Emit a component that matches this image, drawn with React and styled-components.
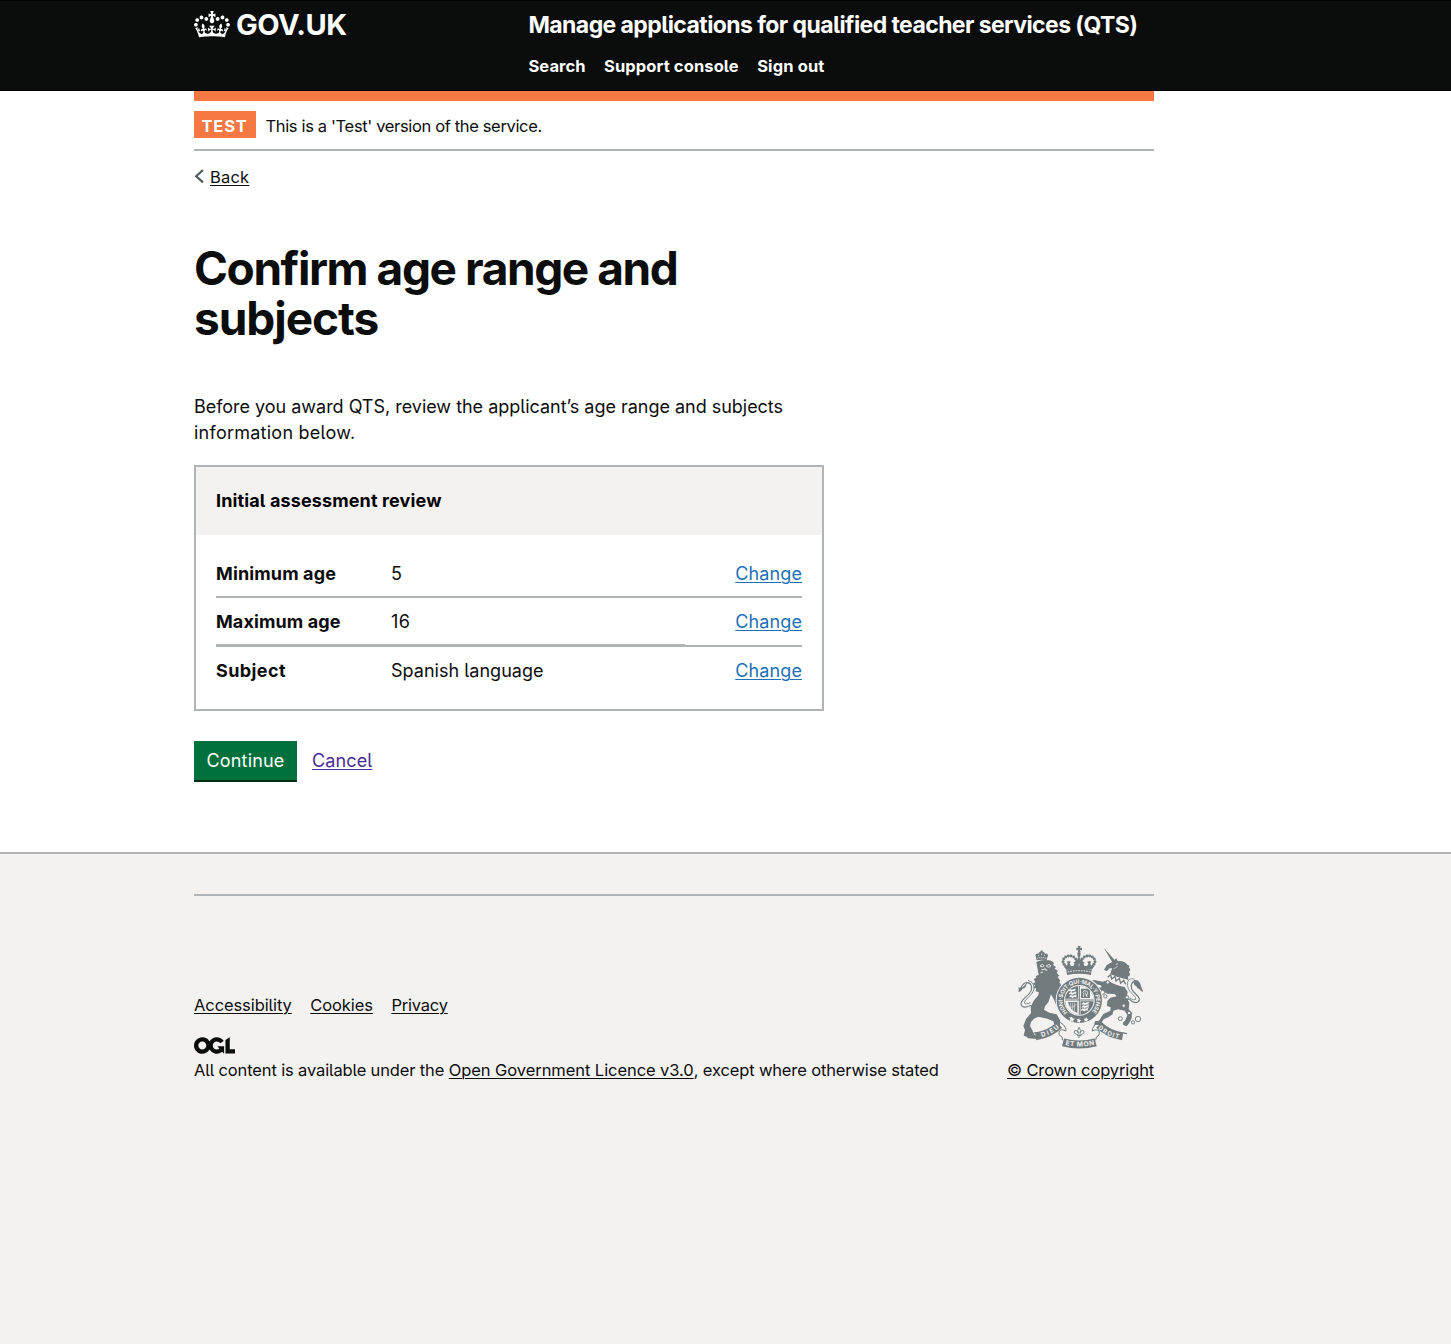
import React from "react";
import styled, { createGlobalStyle } from "styled-components";

const ink = "#0b0c0c";
const rule = "#b1b4b6";
const pale = "#f3f2f1";
const stone = "#717b7d";

const GlobalStyle = createGlobalStyle`
  *, *::before, *::after { box-sizing: border-box; }
  html { background: ${pale}; }
  body {
    margin: 0;
    background: #fff;
    color: ${ink};
    font-family: Inter, "Liberation Sans", sans-serif;
    font-feature-settings: "cv05";
  }
  h1, h2, p, dl, dt, dd, ul { margin: 0; padding: 0; }
`;

const Container = styled.div`
  width: 960px;
  margin-left: 194px;
`;

const Tracked = styled.span`
  letter-spacing: ${(p) => p.$track || 0}px;
`;

const Link = styled.a`
  color: ${(p) => p.$color || ink};
  letter-spacing: ${(p) => p.$track || 0}px;
  text-decoration: underline;
  text-decoration-thickness: 1px;
  text-underline-offset: 2px;
`;

const Header = styled.header`
  height: 91px;
  background: ${ink};
  border-top: 1px solid #000;
  border-bottom: 1px solid #000;
  color: #fff;
`;

const HeaderInner = styled(Container)`
  display: flex;
`;

const LogoLink = styled.a`
  display: flex;
  width: 334.5px;
  padding-top: 10px;
  color: #fff;
`;

const Crown = styled.svg`
  display: block;
  width: 36px;
  height: 26.5px;
  margin-right: 6px;
`;

const LogoText = styled.span`
  font-size: 29px;
  line-height: 28px;
  font-weight: 700;
  letter-spacing: -0.5px;
`;

const ServiceName = styled.div`
  padding-top: 12px;
  font-size: 23px;
  line-height: 24px;
  font-weight: 700;
  letter-spacing: -0.58px;
  white-space: nowrap;
`;

const Nav = styled.nav`
  display: flex;
  gap: 18.5px;
  padding-top: 19px;
  font-size: 16.5px;
  line-height: 20px;
  font-weight: 700;
`;

const Strip = styled.div`
  height: 10px;
  background: #f77842;
`;

const PhaseBanner = styled.div`
  display: flex;
  gap: 9.5px;
  height: 50px;
  padding-top: 10px;
  border-bottom: 2px solid ${rule};
  font-size: 16.5px;
`;

const Tag = styled.strong`
  width: 62px;
  height: 27px;
  padding: 3px 0 0 7.5px;
  background: #f77842;
  color: #fff;
  line-height: 24px;
  letter-spacing: 0.8px;
`;

const PhaseText = styled.span`
  padding-top: 3px;
  line-height: 24px;
  letter-spacing: -0.35px;
`;

const BackRow = styled.div`
  display: flex;
  align-items: center;
  height: 20px;
  margin-top: 16px;
  font-size: 16.5px;
  line-height: 20px;
`;

const Chevron = styled.svg`
  width: 16px;
  height: 16px;
`;

const Main = styled.main`
  width: 630px;
  height: 665px;
  padding-top: 56px;
`;

const Title = styled.h1`
  font-size: 46px;
  line-height: 50px;
  font-weight: 700;
  letter-spacing: -1.42px;
`;

const Lead = styled.p`
  margin-top: 51px;
  font-size: 18px;
  line-height: 26px;
  letter-spacing: -0.02px;
`;

const Card = styled.section`
  height: 246px;
  margin-top: 19px;
  border: 2px solid ${rule};
  font-size: 18px;
  line-height: 26px;
`;

const CardTitle = styled.h2`
  height: 68px;
  padding: 21px 20px 0;
  background: ${pale};
  color: #000;
  font-size: 18px;
  line-height: 26px;
  letter-spacing: 0.13px;
`;

const Summary = styled.dl`
  padding: 15px 20px 0;
`;

const SummaryRow = styled.div`
  display: grid;
  grid-template-columns: 175px 294px 117px;
  height: ${(p) => p.$height}px;
`;

const Cell = styled.dd`
  padding-top: 11px;
  border-bottom: ${(p) => p.$line}px solid ${rule};
  letter-spacing: ${(p) => p.$track || 0}px;
`;

const Key = styled(Cell)`
  font-weight: 700;
`;

const Action = styled(Cell)`
  text-align: right;
`;

const Actions = styled.div`
  display: flex;
  gap: 15px;
  margin-top: 30px;
  font-size: 18px;
  line-height: 39px;
`;

const Button = styled.button`
  width: 103px;
  height: 39px;
  padding: 0;
  border: 0;
  background: #00703c;
  box-shadow: 0 2px 0 #002d18;
  color: #fff;
  font: inherit;
  font-feature-settings: inherit;
  letter-spacing: 0.17px;
`;

const Footer = styled.footer`
  height: 492px;
  padding-top: 40px;
  border-top: 2px solid ${rule};
  background: ${pale};
  font-size: 16.5px;
  line-height: 20px;
`;

const FooterInner = styled(Container)`
  display: flex;
  justify-content: space-between;
  padding-top: 50px;
  border-top: 2px solid ${rule};
`;

const FooterMeta = styled.div`
  padding-top: 49px;
`;

const FooterLinks = styled.div`
  display: flex;
  gap: 18.5px;
`;

const OglLogo = styled.svg`
  display: block;
  width: 41px;
  height: 17px;
  margin: 22px 0 6px;
`;

const Copyright = styled.div`
  display: flex;
  flex-direction: column;
  align-items: center;
  width: 147px;
  white-space: nowrap;
`;

const CrestSvg = styled.svg`
  display: block;
  width: 125px;
  height: 103px;
  margin-bottom: 11px;
`;

const rows = [
  { key: "Minimum age", value: "5", height: 48, line: 2, kt: 0.13, vt: 0 },
  { key: "Maximum age", value: "16", height: 49, line: 3, kt: 0.1, vt: 0.5 },
  { key: "Subject", value: "Spanish language", height: 50, line: 0, kt: 0.4, vt: 0.03 },
];

const pearls = [
  [177, 88], [174, 80], [176, 72], [182, 66], [190, 63], [198, 63], [206, 66], [212, 72],
  [267, 88], [270, 80], [268, 72], [262, 66], [254, 63], [246, 63], [238, 66], [232, 72],
  [222, 62], [222, 71], [222, 80],
];

const shieldLions = [[199, 166], [201, 175], [202, 184], [239, 206], [239, 215], [237, 224]];

function Crest() {
  return (
    <CrestSvg viewBox="39 33 375 309" fill={stone} aria-hidden="true">
      <defs>
        <clipPath id="shield"><circle cx="223" cy="196" r="43" /></clipPath>
        <path id="garter" d="M183 236 A56.5 56.5 0 1 1 265 234" />
        <path id="ribbonLeft" d="M92 304 Q136 297 163 270" />
        <path id="ribbonMid" d="M174 322 Q223 335 272 322" />
        <path id="ribbonRight" d="M282 270 Q309 297 353 304" />
      </defs>

      {/* crown */}
      <path d="M218 33h9l-2 6 6-1v8l-6-1 2 7h-9l2-7-6 1v-8l6 1z" />
      <circle cx="222" cy="56" r="5" />
      {pearls.map(([x, y]) => (
        <circle key={`${x}-${y}`} cx={x} cy={y} r="4.4" />
      ))}
      <path d="M184 104l-8-10 6-6 4 5 2-8-3-5 6-2 6 2-3 6 4 7 7 0 4-7-5-3 6-3 3-7h18l3 7 6 3-5 3 4 7 7 0 4-7-3-6 6-2 6 2-3 5 2 8 4-5 6 6-8 10z" />
      <path d="M184 105q38-9 76 0l-2 15q-36-8-72 0z" />
      <path d="M188 111q35-8 69 0" fill="none" stroke={pale} strokeWidth="3" strokeDasharray="5 3" />
      <path d="M206 80l-5 9M238 80l5 9M222 86v8" fill="none" stroke={pale} strokeWidth="2" />

      {/* lion */}
      <path d="M91 60q3-6 9-4 2-6 10-7 8 1 10 7 7-2 9 4l-4 16q-15-4-30 0z" />
      <circle cx="110" cy="50" r="3.6" />
      <path d="M96 70q14-4 28 0M99 63l4-3M117 60l4 3M110 56v5" fill="none" stroke={pale} strokeWidth="2.4" strokeDasharray="4 2" />
      <path d="M94 81q17-9 35-5 14 1 18 9l-3 5 9 6-4 5 10 7-4 5 8 9-5 4 8 11-3 4 6 10 3 10-8-2-3 13q-2 18 3 30l3 17-12-5-8-20-9-16-8 24-10 12-3 10 16 9 22 5 10 17 0 17-4 12-20 1-1-9 9-3-4-14-18-8-27-6-13 6-9 10-3 12 8 14 2 10 14 8-3 7-27-2-4-5-9-3 4-17-5-12 8-21 15-18-1-18 9-19 13-15 3-10-10-3 1-9-8-1 5-8-7-4 8-6-5-9 8-4-2-5 9-3z" />
      <path d="M105 93l7-5 5 4-4 4zM124 93l8-5 6 5-8 4zM118 98l5 6M109 104q10-3 18 3M106 113l8-2" fill="none" stroke={pale} strokeWidth="2.6" />
      <path d="M80 211q-28 12-32-3 0-10 15-23 22-18 16-33-4-11-17-9-12 4-16 22" fill="none" stroke={stone} strokeWidth="3.4" />
      <path d="M76 203q-15 7-18 1 0-7 12-17 19-17 17-32-3-16-18-18" fill="none" stroke={stone} strokeWidth="2.8" />
      <path d="M66 140q-7 14-16 17-7 4-10-2 3 12 0 17 9-2 13-11 12-3 13-21z" />

      {/* unicorn */}
      <path d="M296 38l35 39-8 6z" />
      <path d="M327 78l6-9 5 9q20-2 29 11 10 3 4 8 9 8 1 13 7 11-3 15l1 10-9-3q-25-5-45-15 3-13 6-17l-8 0-9 9-8-5 9-15z" />
      <path d="M339 86l-7 3M326 102l12-8" stroke={pale} strokeWidth="2" />
      <path d="M308 127l9-8 3 13 10-8 3 14 10-8 4 15 9-9 6 12" fill="none" stroke={stone} strokeWidth="4" />
      <path d="M308 136q22 16 51 20l9 15-3 17 8 16-2 19 10 10-1 17-6 12-9 12-11-6 6-10 7-18-8-13-20-4-14 4-2 11-12 8-15 7-11 17-18-1 3-10 12-2 13-20 21-10 1-10-11-4 1-15 9-10 19-4-6-7-22-1-18-10-15-1-7 8 8 9 11 2-1 11-15-3-12-17 10-17 23-1-5-7-18-2-12 2-6-9 17-6 26 5z" />
      <path d="M370 208q-10-18 4-15 12 14 24 8 13-8-6-24-18-16-12-31 5-9 20-7" fill="none" stroke={stone} strokeWidth="3.6" />
      <path d="M375 189q11 9 17 4 2-6-9-15-19-17-15-37 4-14 20-8" fill="none" stroke={stone} strokeWidth="2.4" />
      <path d="M386 135q12-2 19 9 3 10 10 27-9-3-12-9-6 0-8-7-8-2-9-11z" />
      <g fill="none" stroke={stone} strokeWidth="2.8">
        <circle cx="399" cy="252" r="8" />
        <circle cx="384" cy="262" r="5" />
        <circle cx="346" cy="251" r="6" />
        <circle cx="361" cy="265" r="6" />
        <circle cx="293" cy="172" r="6" fill={pale} />
        <circle cx="301" cy="184" r="5" fill={pale} />
        <circle cx="308" cy="142" r="5" fill={pale} />
        <circle cx="366" cy="187" r="5" fill={pale} />
        <circle cx="356" cy="212" r="5" fill={pale} />
        <circle cx="372" cy="234" r="5" fill={pale} />
      </g>

      {/* garter and shield */}
      <circle cx="223" cy="196" r="71" fill={pale} />
      <circle cx="223" cy="196" r="57" fill="none" stroke={stone} strokeWidth="22" />
      <g clipPath="url(#shield)">
        <path d="M180 152h86v88h-86z" />
        <path d="M181 195h42v45h-42zM223 152h43v43h-43z" fill={pale} />
        <path d="M228 161h27v28h-27z" />
        <path d="M235 186l2-9-4-4 4-6 8 1 4 6-4 6 1 6M241 172l4 12" fill="none" stroke={pale} strokeWidth="2.4" />
        <path d="M189 201h28v33q-22-8-28-33z" />
        <path d="M197 203v15M203 203v22M209 203v26M214 207q-6 11-17 10" fill="none" stroke={pale} strokeWidth="1.8" />
        {shieldLions.map(([x, y]) => (
          <path key={`${x}-${y}`} d={`M${x - 9} ${y}l5-4 6 2 8-3 4 2-3 2 2 5-4-2-6 1-3 3-3-4-6 1z`} fill={pale} />
        ))}
        <path d="M223 152v88M180 195h86" stroke={pale} strokeWidth="7" />
        <path d="M223 152v88M180 195h86" stroke={stone} strokeWidth="3" />
      </g>
      <text fontSize="17" fontWeight="700" fill={pale} dominantBaseline="central">
        <textPath href="#garter" textLength="262">HONI·SOIT·QUI·MAL·Y·PENSE</textPath>
      </text>
      <path d="M200 245l4 5 6 1-5 4 0 6-5-4-6 1 2-6-4-5 6 0zM222 249l2 5 5 2-4 3 0 5-4-3-5 1 2-5-3-4 5 0zM244 246l2 5 5 1-4 4 1 5-5-3-5 2 1-5-3-4 5 0z" fill={pale} />

      {/* motto ribbons */}
      <g fill="none">
        <path d="M92 304 Q136 297 163 270M282 270 Q309 297 353 304M174 322 Q223 335 272 322" stroke={stone} strokeWidth="24" />
        <path d="M80 296l14-3M366 296l-14-3" stroke={stone} strokeWidth="4" />
        <path d="M154 263q12-5 22 7 9 12 7 18-14-7-20 0-4 13 8 18l2 10M291 263q-12-5-22 7-9 12-7 18 14-7 20 0 4 13-8 18l-2 10" stroke={stone} strokeWidth="3" />
      </g>
      <g fill={pale} fontWeight="700" dominantBaseline="central">
        <text fontSize="19">
          <textPath href="#ribbonLeft" startOffset="17" textLength="58">DIEU</textPath>
        </text>
        <text fontSize="20">
          <textPath href="#ribbonMid" startOffset="8" textLength="86">ET MON</textPath>
        </text>
        <text fontSize="18">
          <textPath href="#ribbonRight" startOffset="4" textLength="66">DROIT</textPath>
        </text>
      </g>
      <path d="M222 277q8 9 3 18 2-10 11-8 5 8-4 10-4-1-3 3h-13q1-4-3-3-9-2-4-10 9-2 11 8-5-9 2-18zM216 302h13M222 302v7" fill="none" stroke={stone} strokeWidth="2.8" />
    </CrestSvg>
  );
}

export default function App() {
  return (
    <>
      <GlobalStyle />
      <Header>
        <HeaderInner>
          <LogoLink>
            <Crown viewBox="0 0 132 97" fill="currentColor" aria-hidden="true">
              <path d="M25 30.2c3.5 1.5 7.7-.2 9.1-3.7 1.5-3.6-.2-7.8-3.9-9.2-3.6-1.4-7.6.3-9.1 3.9-1.4 3.5.3 7.5 3.9 9zM9 39.5c3.6 1.5 7.8-.2 9.2-3.7 1.5-3.6-.2-7.8-3.9-9.1-3.6-1.5-7.6.2-9.1 3.8-1.4 3.5.3 7.5 3.8 9zM4.4 57.2c3.5 1.5 7.7-.2 9.1-3.8 1.5-3.6-.2-7.7-3.9-9.1-3.5-1.5-7.6.3-9.1 3.8-1.4 3.5.3 7.6 3.9 9.1zm38.3-21.4c3.5 1.5 7.7-.2 9.1-3.8 1.5-3.6-.2-7.7-3.9-9.1-3.6-1.5-7.6.3-9.1 3.8-1.3 3.6.4 7.7 3.9 9.1zm64.4-5.6c-3.6 1.5-7.8-.2-9.1-3.7-1.5-3.6.2-7.8 3.8-9.2 3.6-1.4 7.7.3 9.2 3.9 1.3 3.5-.4 7.5-3.9 9zm15.9 9.3c-3.6 1.5-7.7-.2-9.1-3.7-1.5-3.6.2-7.8 3.7-9.1 3.6-1.5 7.7.2 9.2 3.8 1.5 3.5-.3 7.5-3.8 9zm4.7 17.7c-3.6 1.5-7.8-.2-9.2-3.8-1.5-3.6.2-7.7 3.9-9.1 3.6-1.5 7.7.3 9.2 3.8 1.3 3.5-.4 7.6-3.9 9.1zM89.3 35.8c-3.6 1.5-7.8-.2-9.2-3.8-1.4-3.6.2-7.7 3.9-9.1 3.6-1.5 7.7.3 9.2 3.8 1.4 3.6-.3 7.7-3.9 9.1zM69.7 17.7l8.9 4.7V9.3l-8.9 2.8c-.2-.3-.5-.6-.9-.9L72.4 0H59.6l3.5 11.2c-.3.3-.6.5-.9.9l-8.8-2.8v13.1l8.8-4.7c.3.3.6.7.9.9l-5 15.4v.1c-.2.8-.4 1.6-.4 2.4 0 4.1 3.1 7.5 7 8.1h.2c.3 0 .7.1 1 .1.4 0 .7 0 1-.1h.2c4-.6 7.1-4.1 7.1-8.1 0-.8-.1-1.7-.4-2.4V34l-5.1-15.4c.4-.2.7-.6 1-.9zM66 92.8c16.9 0 32.8 1.1 47.1 3.2 4-16.9 8.9-26.7 14-33.5l-9.6-3.4c1 4.9 1.1 7.2 0 10.2-1.5-1.4-3-4.3-4.2-8.7L108.6 76c2.8-2 5-3.2 7.5-3.3-4.4 9.4-10 11.9-13.6 11.2-4.3-.8-6.3-4.6-5.6-7.9 1-4.7 5.7-5.9 8-.5 4.3-8.7-3-11.4-7.6-8.8 7.1-7.2 7.9-13.5 2.1-21.1-8 6.1-8.1 12.3-4.5 20.8-4.7-5.4-12.1-2.5-9.5 6.2 3.4-5.2 7.9-2 7.2 3.1-.6 4.3-6.4 7.8-13.5 7.2-10.3-.9-10.9-8-11.2-13.8 2.5-.5 7.1 1.8 11 7.3L80.2 60c-4.1 4.4-8 5.3-12.3 5.4 1.4-4.4 8-11.6 8-11.6H55.5s6.4 7.2 7.9 11.6c-4.2-.1-8-1-12.3-5.4l1.4 16.4c3.9-5.5 8.5-7.7 10.9-7.3-.3 5.8-.9 12.8-11.1 13.8-7.2.6-12.9-2.9-13.5-7.2-.7-5 3.8-8.3 7.1-3.1 2.7-8.7-4.6-11.6-9.4-6.2 3.7-8.5 3.6-14.7-4.6-20.8-5.8 7.6-5 13.9 2.2 21.1-4.7-2.6-11.9.1-7.7 8.8 2.3-5.5 7.1-4.2 8.1.5.7 3.3-1.3 7.1-5.7 7.9-3.5.7-9-1.8-13.5-11.2 2.5.1 4.7 1.3 7.5 3.3l-4.7-15.4c-1.2 4.4-2.7 7.2-4.3 8.7-1.1-3-.9-5.3 0-10.2l-9.5 3.4c5 6.9 9.9 16.7 14 33.5 14.8-2.1 30.8-3.2 47.7-3.2z" />
            </Crown>
            <LogoText>GOV.UK</LogoText>
          </LogoLink>
          <div>
            <ServiceName>Manage applications for qualified teacher services (QTS)</ServiceName>
            <Nav>
              <Tracked $track={0.05}>Search</Tracked>
              <Tracked $track={0.11}>Support console</Tracked>
              <Tracked $track={0.13}>Sign out</Tracked>
            </Nav>
          </div>
        </HeaderInner>
      </Header>

      <Container>
        <Strip />
        <PhaseBanner>
          <Tag>TEST</Tag>
          <PhaseText>This is a 'Test' version of the service.</PhaseText>
        </PhaseBanner>
        <BackRow>
          <Chevron viewBox="0 0 16 16" fill="none" stroke="#505a5f" strokeWidth="2.2">
            <path d="M9 1L2.2 7.2 9 13.4" />
          </Chevron>
          <Link $track={0.2}>Back</Link>
        </BackRow>
        <Main>
          <Title>
            Confirm age range and <Tracked $track={-1.05}>subjects</Tracked>
          </Title>
          <Lead>
            Before you award QTS, review the applicant’s age range and subjects{" "}
            <Tracked $track={0.25}>information below.</Tracked>
          </Lead>
          <Card>
            <CardTitle>Initial assessment review</CardTitle>
            <Summary>
              {rows.map((r) => (
                <SummaryRow key={r.key} $height={r.height}>
                  <Key as="dt" $line={r.line} $track={r.kt}>{r.key}</Key>
                  <Cell $line={r.line} $track={r.vt}>{r.value}</Cell>
                  <Action $line={Math.min(r.line, 2)}>
                    <Link $color="#1d70b8" $track={0.12}>Change</Link>
                  </Action>
                </SummaryRow>
              ))}
            </Summary>
          </Card>
          <Actions>
            <Button>Continue</Button>
            <Link $color="#4c2c92" $track={0.12}>Cancel</Link>
          </Actions>
        </Main>
      </Container>

      <Footer>
        <FooterInner>
          <FooterMeta>
            <FooterLinks>
              <Link $track={-0.09}>Accessibility</Link>
              <Link $track={-0.08}>Cookies</Link>
              <Link $track={-0.22}>Privacy</Link>
            </FooterLinks>
            <OglLogo viewBox="0 0 483.2 195.7" fill="currentColor" aria-hidden="true">
              <path d="M421.5 142.8V.1l-50.7 32.3v161.1h112.4v-50.7zm-122.3-9.6A47.12 47.12 0 0 1 221 97.8c0-26 21.1-47.1 47.1-47.1 16.7 0 31.4 8.7 39.7 21.8l42.7-27.2A97.63 97.63 0 0 0 268.1 0c-36.5 0-68.3 20.1-85.1 49.7A98 98 0 0 0 97.8 0C43.9 0 0 43.9 0 97.8s43.9 97.8 97.8 97.8c36.5 0 68.3-20.1 85.1-49.7a97.76 97.76 0 0 0 149.6 25.4l19.4 22.2h3v-87.8h-80l24.3 27.5zM97.8 145c-26 0-47.1-21.1-47.1-47.1s21.1-47.1 47.1-47.1 47.1 21.1 47.1 47.1S123.8 145 97.8 145" />
            </OglLogo>
            <Tracked as="p" $track={-0.14}>
              All content is available under the{" "}
              <Link $track={-0.07}>Open Government Licence v3.0</Link>, except where otherwise stated
            </Tracked>
          </FooterMeta>
          <Copyright>
            <Crest />
            <Link $track={-0.13}>© Crown copyright</Link>
          </Copyright>
        </FooterInner>
      </Footer>
    </>
  );
}
